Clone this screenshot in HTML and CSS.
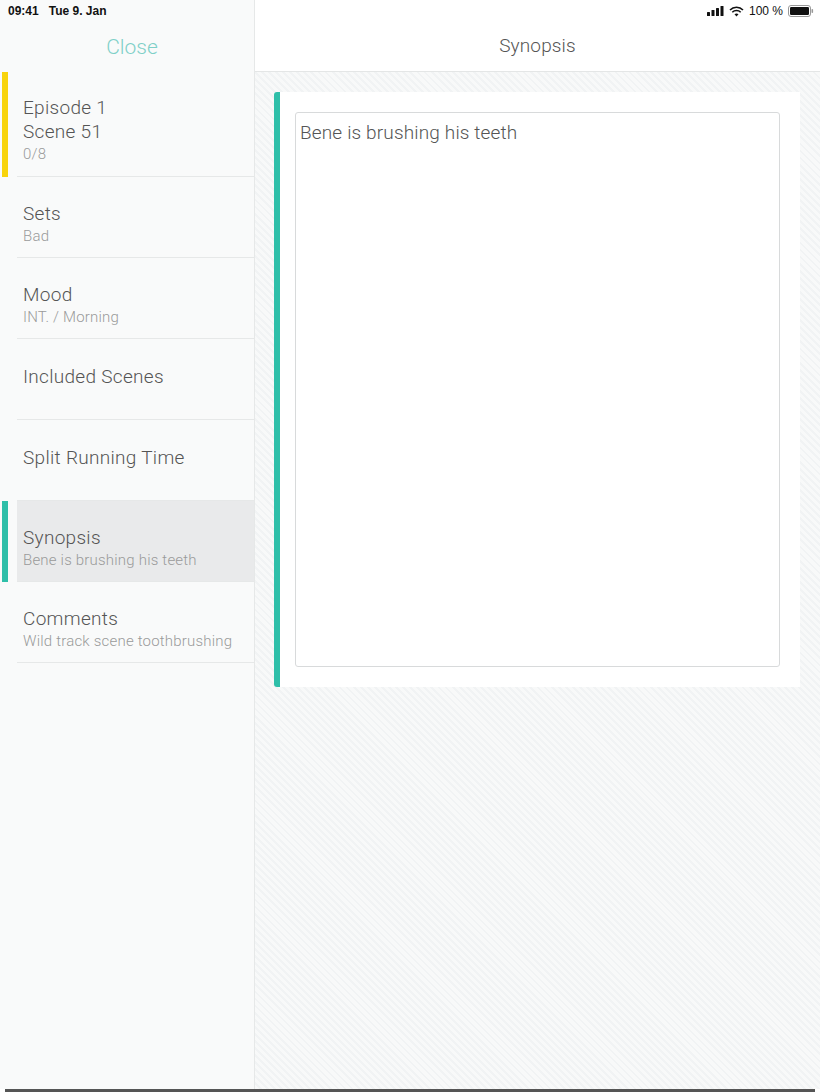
FILE: index.html
```html
<!DOCTYPE html>
<html lang="en">
<head>
    <meta charset="UTF-8">
    <meta name="viewport" content="width=device-width, initial-scale=1.0">
    <title>Synopsis</title>
    <link rel="stylesheet" href="styles.css">
</head>
<body>

    <div class="screen">

        <!-- Left side: scene details -->
        <aside class="sidebar">
            <div class="status-left">09:41&nbsp;&nbsp;&nbsp;Tue 9. Jan</div>
            <div class="close-bar">Close</div>

            <ul class="menu">
                <li class="menu-item scene-head">
                    <span class="marker yellow"></span>
                    <span class="title">Episode 1</span>
                    <span class="title">Scene 51</span>
                    <span class="sub">0/8</span>
                </li>
                <li class="menu-item">
                    <span class="title">Sets</span>
                    <span class="sub">Bad</span>
                </li>
                <li class="menu-item">
                    <span class="title">Mood</span>
                    <span class="sub">INT. / Morning</span>
                </li>
                <li class="menu-item single">
                    <span class="title">Included Scenes</span>
                </li>
                <li class="menu-item single">
                    <span class="title">Split Running Time</span>
                </li>
                <li class="menu-item active">
                    <span class="marker teal"></span>
                    <span class="title">Synopsis</span>
                    <span class="sub">Bene is brushing his teeth</span>
                </li>
                <li class="menu-item">
                    <span class="title">Comments</span>
                    <span class="sub">Wild track scene toothbrushing</span>
                </li>
            </ul>
        </aside>

        <!-- Right side: editor -->
        <main class="detail">
            <div class="status-right">
                <svg class="signal" width="18" height="10" viewBox="0 0 18 10">
                    <rect x="0" y="6" width="3" height="4" rx="0.5" fill="#111"/>
                    <rect x="4.5" y="4" width="3" height="6" rx="0.5" fill="#111"/>
                    <rect x="9" y="2" width="3" height="8" rx="0.5" fill="#111"/>
                    <rect x="13.5" y="0" width="3" height="10" rx="0.5" fill="#111"/>
                </svg>
                <svg class="wifi" width="15" height="11" viewBox="0 0 15 11">
                    <path d="M1 4 A9 9 0 0 1 14 4" fill="none" stroke="#111" stroke-width="1.6"/>
                    <path d="M3.3 6.2 A6 6 0 0 1 11.7 6.2" fill="none" stroke="#111" stroke-width="1.6"/>
                    <path d="M5.5 8.3 A3 3 0 0 1 9.5 8.3 L7.5 10.5 Z" fill="#111"/>
                </svg>
                <span class="battery-text">100 %</span>
                <svg class="battery" width="26" height="12" viewBox="0 0 26 12">
                    <rect x="0.5" y="0.5" width="22" height="11" rx="2.5" fill="none" stroke="#999"/>
                    <rect x="2" y="2" width="19" height="8" rx="1.2" fill="#111"/>
                    <rect x="23.5" y="4" width="1.6" height="4" rx="0.8" fill="#999"/>
                </svg>
            </div>
            <header class="detail-header">Synopsis</header>

            <div class="content">
                <div class="card">
                    <div class="text-box">Bene is brushing his teeth</div>
                </div>
            </div>
        </main>

    </div>

    <div class="home-line"></div>

</body>
</html>
```

FILE: styles.css
```css
* {
    box-sizing: border-box;
}

body {
    margin: 0;
    padding: 0;
    width: 820px;
    height: 1092px;
    overflow: hidden;
    font-family: 'Roboto', 'Liberation Sans', sans-serif;
    font-weight: 300;
    color: #555;
    background: #fff;
    display: flex;
    flex-direction: column;
}

.screen {
    display: flex;
    flex: 1;
}

/* Sidebar */
.sidebar {
    width: 255px;
    background-color: #f9fafa;
    border-right: 1px solid #e6e8e8;
    display: flex;
    flex-direction: column;
}

.status-left {
    height: 22px;
    padding: 4px 0 0 8px;
    font-family: 'Liberation Sans', sans-serif;
    font-weight: bold;
    font-size: 12px;
    color: #111;
}

.close-bar {
    height: 50px;
    text-align: center;
    font-size: 21px;
    color: #7fd0c8;
    padding: 13px 0 0 10px;
}

.menu {
    list-style: none;
    margin: 0;
    padding: 0;
}

.menu-item {
    position: relative;
    height: 81px;
    margin-left: 17px;
    padding: 25px 0 0 6px;
    border-bottom: 1px solid #e6e8e8;
    display: flex;
    flex-direction: column;
}

.menu-item.single {
    padding-top: 26px;
}

.menu-item.scene-head {
    height: 105px;
    padding-top: 24px;
}

.menu-item.active {
    background-color: #e9eaeb;
}

.marker {
    position: absolute;
    left: -15px;
    top: 0;
    bottom: -1px;
    width: 6px;
}

.marker.yellow {
    background-color: #f8d40c;
}

.marker.teal {
    background-color: #2ebfa9;
}

.title {
    font-size: 19px;
    line-height: 24px;
    letter-spacing: 0.3px;
    color: #555;
}

.sub {
    font-size: 15px;
    line-height: 20px;
    letter-spacing: 0.2px;
    color: #9a9a9a;
}

/* Detail pane */
.detail {
    flex: 1;
    display: flex;
    flex-direction: column;
}

.status-right {
    height: 22px;
    background: #fff;
    display: flex;
    justify-content: flex-end;
    align-items: center;
    gap: 4px;
    padding-right: 6px;
    font-family: 'Liberation Sans', sans-serif;
    font-weight: normal;
    font-size: 12px;
    color: #111;
}

.battery-text {
    margin: 0 1px;
}

.detail-header {
    height: 50px;
    background: #fff;
    border-bottom: 1px solid #e4e6e6;
    text-align: center;
    font-size: 19px;
    letter-spacing: 0.15px;
    padding-top: 12px;
}

.content {
    flex: 1;
    padding: 20px 20px 0 19px;
    background-color: #f8f9f9;
    background-image: repeating-linear-gradient(45deg, #f8f9f9 0px, #f8f9f9 3px, #f1f3f4 3px, #f1f3f4 5px);
}

.card {
    height: 595px;
    background: #fff;
    border-left: 6px solid #2ebfa9;
    border-radius: 3px 0 0 3px;
    padding: 20px 20px 20px 15px;
}

.text-box {
    height: 100%;
    border: 1px solid #d8dadb;
    border-radius: 3px;
    padding: 8px 4px;
    font-size: 19px;
    letter-spacing: 0.15px;
    color: #555;
}

.home-line {
    height: 3px;
    margin: 0 5px;
    background: #555;
}
```
